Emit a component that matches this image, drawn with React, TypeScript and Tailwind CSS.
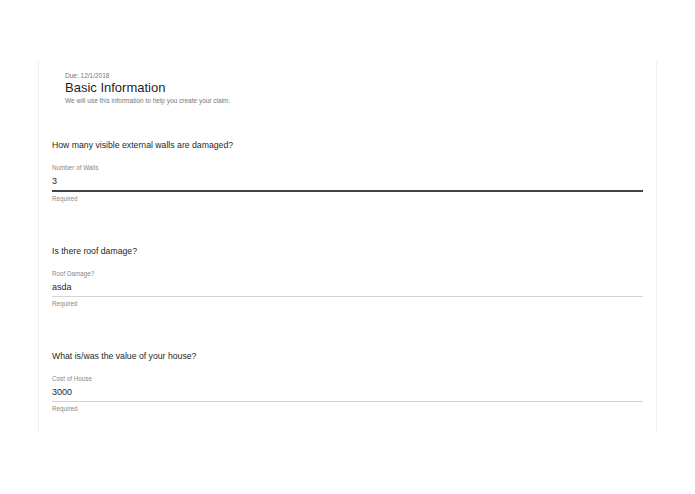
import React from "react";

function Field({
  question,
  label,
  value,
  focused,
  top,
}: {
  question: string;
  label: string;
  value: string;
  focused?: boolean;
  top: string;
}) {
  return (
    <div className={`pl-[13px] pr-[13px] ${top}`}>
      <div className="text-[8.7px] leading-[12px] text-[#1f1f1f]">{question}</div>
      <div className="mt-[13px] text-[6.3px] leading-[8px] text-[#888]">{label}</div>
      <div
        className={`mt-[3px] text-[9px] leading-[12px] text-[#1f1f1f] pb-[3px] ${
          focused ? "border-b-2 border-[#444]" : "border-b border-[#d4d4d4]"
        }`}
      >
        {value}
      </div>
      <div className="mt-[3px] text-[6.3px] leading-[8px] text-[#888]">Required</div>
    </div>
  );
}

export default function App() {
  return (
    <div
      className="w-[695px] h-[494px] bg-white overflow-hidden pt-[62px] pl-[38px]"
      style={{ fontFamily: '"Liberation Sans", Arial, Helvetica, sans-serif' }}
    >
      <div className="w-[619px] h-[370px] border-l border-r border-[#eeeeee]">
        <div className="pl-[26px] pt-[9px]">
          <div className="text-[6.5px] leading-[9px] text-[#777]">Due: 12/1/2018</div>
          <div className="text-[13px] leading-[16px] text-[#1f1f1f]">Basic Information</div>
          <div className="mt-[1px] text-[6.5px] leading-[8px] text-[#777]">
            We will use this information to help you create your claim.
          </div>
        </div>
        <Field
          top="mt-[34px]"
          question="How many visible external walls are damaged?"
          label="Number of Walls"
          value="3"
          focused
        />
        <Field top="mt-[42px]" question="Is there roof damage?" label="Roof Damage?" value="asda" />
        <Field
          top="mt-[42px]"
          question="What is/was the value of your house?"
          label="Cost of House"
          value="3000"
        />
      </div>
    </div>
  );
}
